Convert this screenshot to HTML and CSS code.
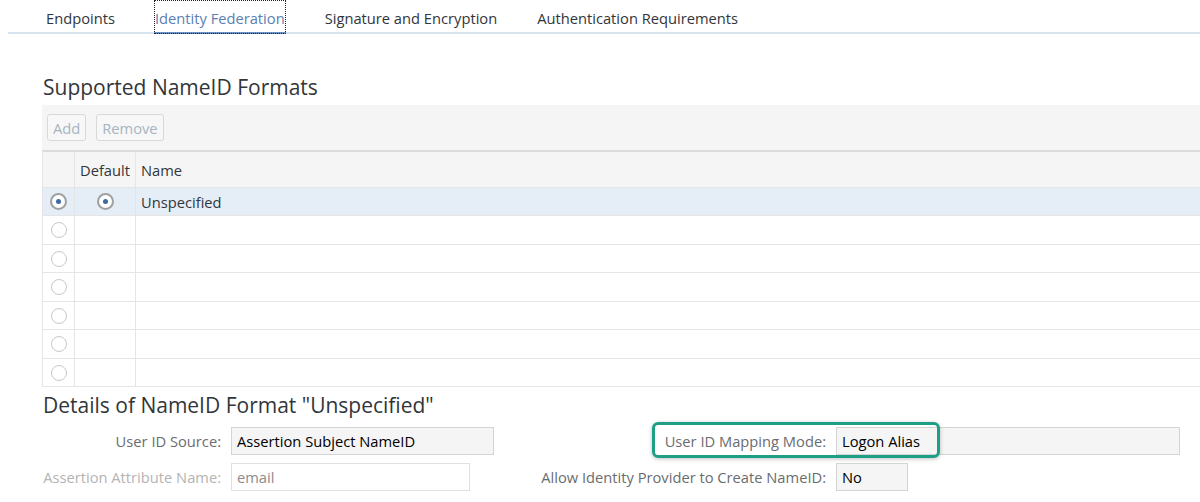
FILE: index.html
```html
<!DOCTYPE html>
<html lang="en">

<head>
    <meta charset="UTF-8">
    <title>Identity Federation</title>
    <link rel="stylesheet" href="styles.css">
</head>

<body>
    <!-- Tab strip -->
    <div class="tabs">
        <div class="tab">Endpoints</div>
        <div class="tab active">Identity Federation</div>
        <div class="tab">Signature and Encryption</div>
        <div class="tab">Authentication Requirements</div>
    </div>

    <div class="content">
        <h2>Supported NameID Formats</h2>

        <div class="toolbar">
            <button disabled>Add</button>
            <button disabled>Remove</button>
        </div>

        <!-- NameID formats table -->
        <div class="table">
            <div class="row head">
                <div class="cell sel"></div>
                <div class="cell def">Default</div>
                <div class="cell name">Name</div>
            </div>
            <div class="row selected">
                <div class="cell sel"><span class="radio on"></span></div>
                <div class="cell def"><span class="radio on"></span></div>
                <div class="cell name">Unspecified</div>
            </div>
            <div class="row">
                <div class="cell sel"><span class="radio"></span></div>
                <div class="cell def"></div>
                <div class="cell name"></div>
            </div>
            <div class="row">
                <div class="cell sel"><span class="radio"></span></div>
                <div class="cell def"></div>
                <div class="cell name"></div>
            </div>
            <div class="row">
                <div class="cell sel"><span class="radio"></span></div>
                <div class="cell def"></div>
                <div class="cell name"></div>
            </div>
            <div class="row">
                <div class="cell sel"><span class="radio"></span></div>
                <div class="cell def"></div>
                <div class="cell name"></div>
            </div>
            <div class="row">
                <div class="cell sel"><span class="radio"></span></div>
                <div class="cell def"></div>
                <div class="cell name"></div>
            </div>
            <div class="row">
                <div class="cell sel"><span class="radio"></span></div>
                <div class="cell def"></div>
                <div class="cell name"></div>
            </div>
        </div>

        <h2 class="details-title">Details of NameID Format "Unspecified"</h2>

        <!-- Details form -->
        <div class="form">
            <div class="col left">
                <div class="field">
                    <label>User ID Source:</label>
                    <div class="input readonly w-source">Assertion Subject NameID</div>
                </div>
                <div class="field disabled">
                    <label>Assertion Attribute Name:</label>
                    <div class="input w-attr">email</div>
                </div>
            </div>
            <div class="col right">
                <div class="field">
                    <label>User ID Mapping Mode:</label>
                    <div class="input readonly w-mode">Logon Alias</div>
                    <div class="highlight"></div>
                </div>
                <div class="field">
                    <label>Allow Identity Provider to Create NameID:</label>
                    <div class="input readonly w-allow">No</div>
                </div>
            </div>
        </div>
    </div>
</body>

</html>
```

FILE: styles.css
```css
/* General */
body {
    margin: 0;
    font-family: "Open Sans", Arial, sans-serif;
    font-size: 14.7px;
    color: #32363a;
    background-color: white;
    overflow: hidden;
}

/* Tabs */
.tabs {
    display: flex;
    gap: 38px;
    margin-left: 8px;
    padding-left: 37px;
    height: 32px;
    border-bottom: 2px solid #d8e3f0;
}

.tab {
    box-sizing: border-box;
    height: 34px;
    padding: 2px 1px 0;
    line-height: 32px;
    white-space: nowrap;
}

.tab.active {
    color: #5a80b4;
    outline: 1px dotted #222;
    outline-offset: -1px;
    border-bottom: 2px solid #6a8fc0;
}

/* Content */
.content {
    padding-left: 42px;
}

h2 {
    margin: 40px 0 5px 1px;
    font-size: 21px;
    font-weight: normal;
    line-height: 26px;
    color: #32363a;
}

.toolbar {
    display: flex;
    gap: 10px;
    padding: 9px 5px;
    background-color: #f5f5f5;
}

.toolbar button {
    height: 27px;
    padding: 0 5px;
    font-family: inherit;
    font-size: 14.7px;
    color: #a7b4c2;
    background-color: #f7f7f7;
    border: 1px solid #d9d9d9;
    border-radius: 3px;
}

/* Table */
.table {
    border-top: 2px solid #dcdcdc;
    border-left: 1px solid #e5e5e5;
}

.row {
    display: flex;
    height: 27px;
    border-bottom: 1px solid #e5e5e5;
}

.row:nth-child(odd) {
    height: 28px;
}

.row.head {
    height: 35px;
    background-color: #f5f5f5;
}

.row.selected {
    background-color: #e5edf6;
}

.cell {
    display: flex;
    align-items: center;
    border-right: 1px solid #e5e5e5;
}

.cell.sel {
    width: 31px;
    justify-content: center;
}

.cell.def {
    width: 60px;
    justify-content: center;
}

.cell.name {
    flex: 1;
    padding-left: 5px;
    border-right: none;
}

.row.head .cell.def {
    justify-content: flex-start;
    padding-left: 5px;
    width: 55px;
}

.radio {
    width: 14px;
    height: 14px;
    border: 1px solid #c8c8c8;
    border-radius: 50%;
    background-color: white;
    display: flex;
    align-items: center;
    justify-content: center;
}

.radio.on {
    border: 2px solid #a0a0a0;
    width: 13px;
    height: 13px;
}

.radio.on::after {
    content: "";
    width: 5px;
    height: 5px;
    border-radius: 50%;
    background-color: #3b6aa5;
}

/* Details form */
h2.details-title {
    margin: 5px 0 9px 1px;
}

.form {
    display: flex;
}

.col {
    display: flex;
    flex-direction: column;
    gap: 8px;
}

.col.left {
    width: 493px;
}

.field {
    display: flex;
    align-items: center;
    gap: 10px;
    position: relative;
}

.field label {
    text-align: right;
    color: #6a6d70;
    white-space: nowrap;
}

.left .field label {
    width: 179px;
}

.right .field label {
    width: 291px;
}

.field.disabled label {
    color: #b4b4b4;
}

.input {
    box-sizing: border-box;
    height: 28px;
    line-height: 26px;
    padding: 0 5px;
    border: 1px solid #d4d4d4;
    background-color: white;
    color: #000;
    white-space: nowrap;
}

.input.readonly {
    background-color: #f5f5f5;
}

.field.disabled .input {
    color: #8c8c8c;
    border-color: #e0e0e0;
}

.w-source { width: 263px; }
.w-attr { width: 239px; }
.w-mode { width: 344px; }
.w-allow { width: 72px; }

/* Annotation frame */
.highlight {
    position: absolute;
    left: 117px;
    top: -5px;
    width: 288px;
    height: 36px;
    box-sizing: border-box;
    border: 3px solid #1e9f85;
    border-radius: 6px;
    box-shadow: 0 1px 4px rgba(0, 0, 0, 0.25);
}
```
